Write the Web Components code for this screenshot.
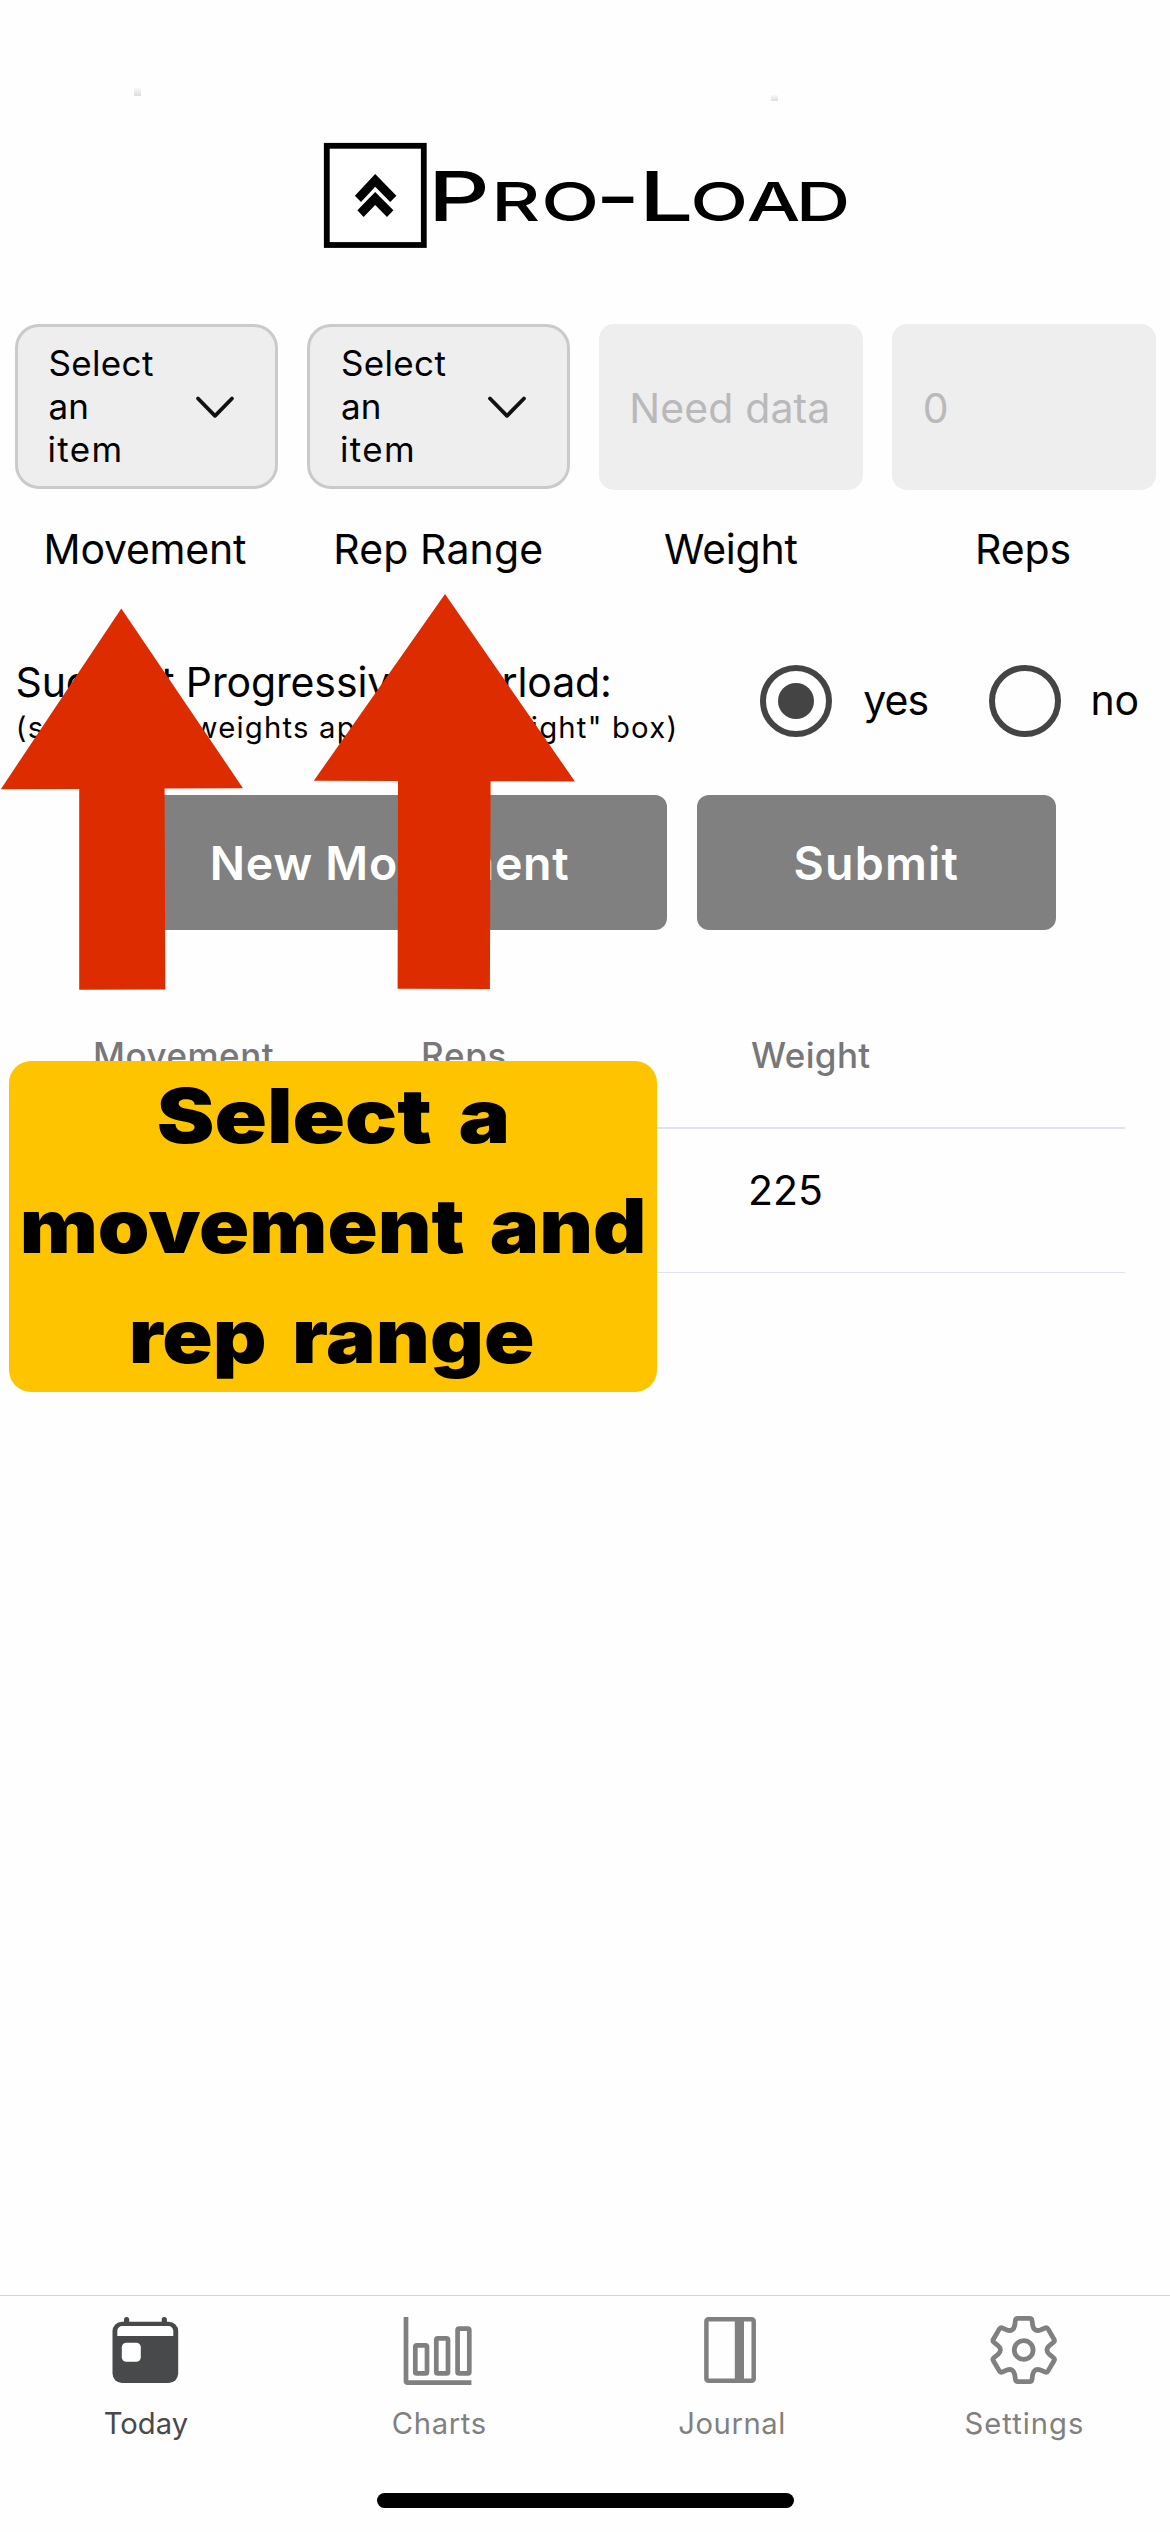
<!DOCTYPE html>
<html lang="en">
<head>
<meta charset="utf-8">
<title>Pro-Load</title>
<style>
  html, body { margin: 0; padding: 0; background: #fefefe; }
  body { width: 1170px; height: 2532px; overflow: hidden; font-family: Inter, "Liberation Sans", sans-serif; color: #000; }
</style>
</head>
<body>
<workout-app></workout-app>
<script>
// Text run whose box is its ink width; tracked (or stretched) to the width it is given.
class FitText extends HTMLElement {
  connectedCallback() {
    if (this.shadowRoot) return;
    const root = this.attachShadow({ mode: 'open' });
    root.innerHTML = `<style>
      :host { display: block; flex: none; white-space: pre; text-align: left; }
      span { display: inline-block; transform-origin: 0 50%; }
    </style><span><slot></slot></span>`;
    const span = root.querySelector('span');
    const text = this.textContent;
    const width = parseFloat(this.getAttribute('width'));
    const cs = getComputedStyle(this);
    const ctx = document.createElement('canvas').getContext('2d');
    ctx.font = `${cs.fontWeight} ${cs.fontSize} ${cs.fontFamily}`;
    ctx.wordSpacing = cs.wordSpacing;
    const m = ctx.measureText(text);
    const ink = m.actualBoundingBoxLeft + m.actualBoundingBoxRight;
    this.style.width = width + 'px';
    if (this.hasAttribute('stretch')) {
      const k = width / ink;
      span.style.transform = `translateX(${m.actualBoundingBoxLeft * k}px) scaleX(${k})`;
    } else {
      span.style.marginLeft = m.actualBoundingBoxLeft + 'px';
      if (text.length > 1) span.style.letterSpacing = (width - ink) / (text.length - 1) + 'px';
    }
  }
}
customElements.define('fit-text', FitText);

const define = (name, html) => customElements.define(name, class extends HTMLElement {
  connectedCallback() {
    if (this.shadowRoot) return;
    const t = document.createElement('template');
    t.innerHTML = html;
    this.attachShadow({ mode: 'open' }).append(t.content.cloneNode(true));
  }
});

define('brand-logo', `<style>
  :host { display: block; width: 530px; height: 105px; }
  svg { display: block; overflow: visible; }
  text { font-family: Inter, sans-serif; font-weight: 500; }
  .sc { text-transform: uppercase; }
</style>
<svg width="530" height="105" viewBox="0 0 530 105">
  <rect x="2.8" y="2.8" width="97" height="99.2" fill="#fff" stroke="#000" stroke-width="5.8"/>
  <path d="M51.2 31 72.4 52.8 66.2 59 51.2 43.7 37 59 30.9 52.8ZM51.2 49 69.4 67.3 63 74 51.2 62 39.6 74 33.4 67.3Z"/>
  <g transform="scale(1.4 1)">
    <text font-size="68.8" y="77.7" x="74.3 119.4 155.2 194 225 261.6 301.9 336.9">P<tspan class="sc" font-size="54">ro</tspan>-L<tspan class="sc" font-size="54">oad</tspan></text>
  </g>
</svg>`);

define('field-column', `<style>
  :host { display: flex; flex: 1 1 0; flex-direction: column; align-items: center; font-size: 41px; line-height: 50px; }
  .control { height: 166px; margin-bottom: 34px; }
</style><div class="control"><slot name="control"></slot></div><slot></slot>`);

define('select-box', `<style>
  :host { box-sizing: border-box; display: flex; justify-content: space-between; align-items: center; width: 263px; height: 165px;
    border: 3px solid #cacaca; border-radius: 24px; background: #eee; padding: 0 40px 0 31.7px; font-size: 35px; line-height: 43px; }
  svg { display: block; margin-top: 1px; }
</style><div><fit-text width="103.5">Select</fit-text><fit-text width="36.8">an</fit-text><fit-text width="70">item</fit-text></div>
<svg width="40" height="24" viewBox="0 0 40 24" fill="none" stroke="#111" stroke-width="3.8" stroke-linecap="round" stroke-linejoin="round"><path d="M3 3.5 20 20.8 37 3.5"/></svg>`);

define('input-box', `<style>
  :host { box-sizing: border-box; display: flex; align-items: center; width: 264px; height: 166px; border-radius: 15px;
    background: #eee; padding: 2px 0 0 33px; font-size: 41px; line-height: 50px; color: #b9b9bb; }
</style><slot></slot>`);

define('radio-option', `<style>
  :host { display: flex; align-items: center; gap: 32.5px; font-size: 41px; line-height: 50px; }
  i { box-sizing: border-box; width: 72px; height: 72px; border: 6px solid #444; border-radius: 50%; display: grid; place-items: center; }
  :host([checked]) i::after { content: ""; width: 36px; height: 36px; border-radius: 50%; background: #444; }
  div { margin-top: -2px; }
</style><i></i><div><slot></slot></div>`);

define('action-button', `<style>
  :host { display: flex; align-items: center; justify-content: center; height: 135px; border-radius: 12px; background: #808080;
    color: #fff; font-size: 46.5px; font-weight: 600; line-height: 58px; }
</style><slot></slot>`);

define('table-row', `<style>
  :host { box-sizing: border-box; display: grid; grid-template-columns: repeat(3, 328px); align-items: center; padding-left: 50px;
    height: 144px; border-bottom: 1px solid #e0e0ee; padding-bottom: 21px; font-size: 41px; line-height: 50px; }
  :host([head]) { height: 145px; border-bottom-width: 2px; padding-bottom: 2px; font-size: 35px; font-weight: 500; color: #777779; }
</style><slot></slot>`);

define('pointer-arrow', `<style>
  :host { position: absolute; }
  svg { display: block; overflow: visible; }
</style><slot></slot>`);

define('hint-card', `<style>
  :host { position: absolute; box-sizing: border-box; width: 647.5px; height: 331px; border-radius: 22px; background: #ffc400;
    display: flex; flex-direction: column; align-items: center; font-size: 75px; font-weight: 900; line-height: 110px; word-spacing: 8px; }
</style><slot></slot>`);

const gear = (() => {
  const tooth = (a) => {
    const c = Math.cos(a), s = Math.sin(a);
    const p = (x, y) => `${(34.7 + x * c - y * s).toFixed(2)} ${(35 + x * s + y * c).toFixed(2)}`;
    return `L${p(-8.3, -29.5)}Q${p(-8, -31.6)} ${p(-5.9, -31.6)}L${p(5.9, -31.6)}Q${p(8, -31.6)} ${p(8.3, -29.5)}L${p(9, -24.5)}C${p(9.7, -20.3)} ${p(12.8, -18.6)} ${p(16.7, -20)}`;
  };
  let d = '';
  for (let i = 0; i < 6; i++) d += tooth(i * Math.PI / 3);
  return 'M' + d.slice(1) + 'Z';
})();

const icons = {
  today: `<path d="M13 8V4.5a2.6 2.6 0 0 1 5.2 0V8M50.7 8V4.5a2.6 2.6 0 0 1 5.2 0V8" fill="currentColor"/>
    <rect x="1.5" y="6.7" width="65.7" height="61.3" rx="9.5" fill="currentColor"/>
    <path d="M6.3 21V16a5 5 0 0 1 5-5H57.3a5 5 0 0 1 5 5V21Z" fill="#fff"/><rect x="10.8" y="27.7" width="19" height="19" rx="4.5" fill="#fff"/>`,
  charts: `<g fill="none" stroke="currentColor" stroke-width="4.7"><path d="M2 2V66q0 1.7 1.7 1.7H67.4"/>
    <rect x="11.3" y="30.3" width="11.7" height="28.1" rx="1.5"/><rect x="32.3" y="23.3" width="11.7" height="35.1" rx="1.5"/><rect x="53.6" y="13.6" width="11.7" height="44.8" rx="1.5"/></g>`,
  journal: `<rect x="10.4" y="4.3" width="47.3" height="61.4" rx="2" fill="none" stroke="currentColor" stroke-width="4.5"/><path d="M38.8 4h9.2V66h-9.2z" fill="currentColor"/>`,
  settings: `<g fill="none" stroke="currentColor" stroke-width="4.8" stroke-linejoin="round"><path d="${gear}"/><circle cx="34.7" cy="35" r="9.4"/></g>`
};

customElements.define('tab-item', class extends HTMLElement {
  connectedCallback() {
    if (this.shadowRoot) return;
    this.attachShadow({ mode: 'open' }).innerHTML = `<style>
      :host { display: flex; flex: 1 1 0; flex-direction: column; align-items: center; gap: 20.5px; color: #808080; font-size: 29.2px; line-height: 36px; }
      :host([active]) { color: #48494b; }
      svg { display: block; overflow: visible; }
    </style><svg width="70" height="70" viewBox="0 0 70 70">${icons[this.getAttribute('icon')]}</svg><slot></slot>`;
  }
});

define('tab-bar', `<style>
  :host { display: flex; flex-direction: column; align-items: center; box-sizing: border-box; height: 237px; border-top: 1px solid #d4d4d4; padding-top: 19px; background: #fefefe; }
  nav { display: flex; width: 100%; }
  i { width: 417px; height: 15px; border-radius: 8px; background: #000; margin-top: 51.5px; }
</style><nav><slot></slot></nav><i></i>`);

define('workout-app', `<style>
  :host { position: relative; display: flex; flex-direction: column; width: 1170px; height: 2532px; background: #fefefe; }
  header { box-sizing: border-box; height: 324px; padding: 143px 0 0 324px; }
  .fields, .suggest, .actions { display: flex; }
  .suggest { align-items: center; height: 88px; margin-top: 83px; padding-left: 17.6px; }
  .copy { width: 742.2px; font-size: 41px; line-height: 50px; }
  .copy .small { font-size: 29.3px; line-height: 35px; margin: 3px 0 0 1.2px; }
  .suggest radio-option + radio-option { margin-left: 61.5px; }
  .actions { gap: 30px; margin-top: 50px; padding-left: 114px; }
  .new { width: 553px; } .submit { width: 359px; }
  .table { flex: 1; margin: 54px 45px 0; }
  .speck { position: absolute; width: 7px; background: linear-gradient(#f8f8f8, #dcdcdc); }
  .a1 { left: 0; top: 608px; } .a2 { left: 313px; top: 594px; }
  hint-card { left: 9px; top: 1061px; }
</style>
<header><brand-logo></brand-logo></header>
<section class="fields">
  <field-column><select-box slot="control"></select-box><fit-text width="199.3">Movement</fit-text></field-column>
  <field-column><select-box slot="control"></select-box><fit-text width="205">Rep Range</fit-text></field-column>
  <field-column><input-box slot="control"><fit-text width="195">Need data</fit-text></input-box><fit-text width="132.4">Weight</fit-text></field-column>
  <field-column><input-box slot="control"><fit-text width="21">0</fit-text></input-box><fit-text width="91.5">Reps</fit-text></field-column>
</section>
<section class="suggest">
  <div class="copy"><fit-text width="591.4">Suggest Progressive Overload:</fit-text><fit-text class="small" width="655.6">(suggested weights appear in "Weight" box)</fit-text></div>
  <radio-option checked><fit-text width="63.2">yes</fit-text></radio-option>
  <radio-option><fit-text width="44">no</fit-text></radio-option>
</section>
<section class="actions">
  <action-button class="new"><fit-text width="355.5">New Movement</fit-text></action-button>
  <action-button class="submit"><fit-text width="162">Submit</fit-text></action-button>
</section>
<section class="table">
  <table-row head><fit-text width="178.7">Movement</fit-text><fit-text width="82.5">Reps</fit-text><fit-text width="119.3">Weight</fit-text></table-row>
  <table-row><span></span><span></span><fit-text width="70">225</fit-text></table-row>
</section>
<tab-bar>
  <tab-item icon="today" active><fit-text width="83">Today</fit-text></tab-item>
  <tab-item icon="charts"><fit-text width="92">Charts</fit-text></tab-item>
  <tab-item icon="journal"><fit-text width="103.8">Journal</fit-text></tab-item>
  <tab-item icon="settings"><fit-text width="116.4">Settings</fit-text></tab-item>
</tab-bar>
<div class="speck" style="left:134px;top:88px;height:8px"></div>
<div class="speck" style="left:771px;top:95px;height:6px"></div>
<pointer-arrow class="a1"><svg width="244" height="382" viewBox="0 0 244 382" fill="#dd2c00"><path d="M121.3.5 243 180.2 164.6 180.5 165.3 381.5 79.2 381.8V181L.8 181.2Z"/></svg></pointer-arrow>
<pointer-arrow class="a2"><svg width="262" height="396" viewBox="0 0 262 396" fill="#dd2c00"><path d="M132 0 262 187.6 177.6 187.3 176.9 395 84.6 394.7 85 186.9.8 186.7Z"/></svg></pointer-arrow>
<hint-card><fit-text stretch width="348">Select a</fit-text><fit-text stretch width="619.7">movement and</fit-text><fit-text stretch width="400.8">rep range</fit-text></hint-card>`);
</script>
</body>
</html>
